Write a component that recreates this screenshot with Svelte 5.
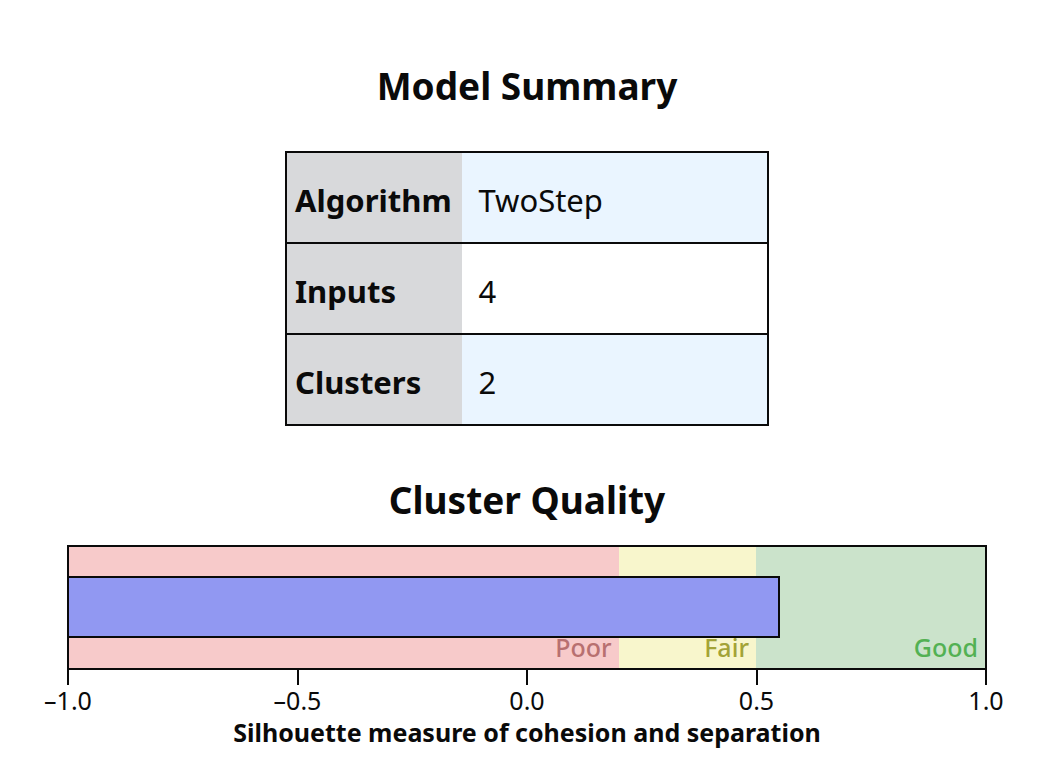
<script>
  const summary = [
    { label: 'Algorithm', value: 'TwoStep' },
    { label: 'Inputs', value: '4' },
    { label: 'Clusters', value: '2' }
  ];
  const bands = [
    { name: 'Poor', from: -1, to: 0.2 },
    { name: 'Fair', from: 0.2, to: 0.5 },
    { name: 'Good', from: 0.5, to: 1 }
  ];
  const ticks = ['–1.0', '–0.5', '0.0', '0.5', '1.0'];
  const silhouette = 0.553;
  const share = (from, to) => ((to - from) / 2) * 100;
</script>

<main>
  <section>
    <h2>Model Summary</h2>
    <table>
      <tbody>
        {#each summary as row}
          <tr>
            <th scope="row">{row.label}</th>
            <td>{row.value}</td>
          </tr>
        {/each}
      </tbody>
    </table>
  </section>

  <section class="quality">
    <h2>Cluster Quality</h2>
    <div class="plot">
      <div class="bands">
        {#each bands as band}
          <div class="band {band.name.toLowerCase()}" style="width: {share(band.from, band.to)}%">
            {band.name}
          </div>
        {/each}
      </div>
      <div class="bar" style="width: {share(-1, silhouette)}%"></div>
    </div>
    <div class="axis">
      {#each ticks as tick}
        <div class="tick"><i></i><span>{tick}</span></div>
      {/each}
    </div>
    <p>Silhouette measure of cohesion and separation</p>
  </section>
</main>

<style>
  :global(body) {
    margin: 0;
    background: #fff;
  }
  main {
    padding: 58px 50px 24px 67px;
    font-family: 'Noto Sans', 'Open Sans', sans-serif;
    color: #0a0a0a;
  }
  h2 {
    margin: 0;
    font-size: 37px;
    line-height: 56px;
    font-weight: 700;
    text-align: center;
  }
  table {
    width: 52.6%;
    margin: 37px auto 0;
    border-collapse: collapse;
    border: 2px solid #0a0a0a;
    table-layout: fixed;
  }
  tr {
    height: 91px;
    border-bottom: 2px solid #0a0a0a;
  }
  tr:nth-child(odd) {
    background: #eaf5ff;
  }
  th,
  td {
    padding: 5px 8px 0;
    font-size: 31px;
    line-height: 40px;
    text-align: left;
  }
  th {
    width: 36.6%;
    box-sizing: border-box;
    padding-right: 0;
    background: #d8d9db;
    font-weight: 700;
  }
  td {
    padding-left: 16px;
    font-weight: 400;
  }
  .quality {
    margin-top: 46px;
  }
  .plot {
    display: grid;
    height: 121px;
    margin-top: 17px;
    border: 2px solid #0a0a0a;
  }
  .bands,
  .bar {
    grid-area: 1 / 1;
  }
  .bands {
    display: flex;
  }
  .band {
    box-sizing: border-box;
    display: flex;
    align-items: flex-end;
    justify-content: flex-end;
    padding: 0 7px 3px;
    font-size: 25px;
    line-height: 36px;
    font-weight: 500;
  }
  .poor {
    background: #f7caca;
    color: #b87070;
  }
  .fair {
    background: #f8f6cc;
    color: #a3a336;
  }
  .good {
    background: #cbe3cb;
    color: #53b153;
  }
  .bar {
    z-index: 1;
    box-sizing: border-box;
    height: 62px;
    margin-top: 29px;
    border: 2px solid #0a0a0a;
    border-left: 0;
    background: #9198f2;
  }
  .axis {
    display: flex;
    justify-content: space-between;
    padding: 0 1px;
  }
  .tick {
    display: flex;
    flex-direction: column;
    align-items: center;
    width: 0;
    font-size: 25px;
    line-height: 30px;
    white-space: nowrap;
  }
  .tick i {
    width: 2px;
    height: 15px;
    background: #0a0a0a;
  }
  p {
    margin: 0;
    font-size: 25px;
    line-height: 34px;
    font-weight: 700;
    text-align: center;
  }
</style>
